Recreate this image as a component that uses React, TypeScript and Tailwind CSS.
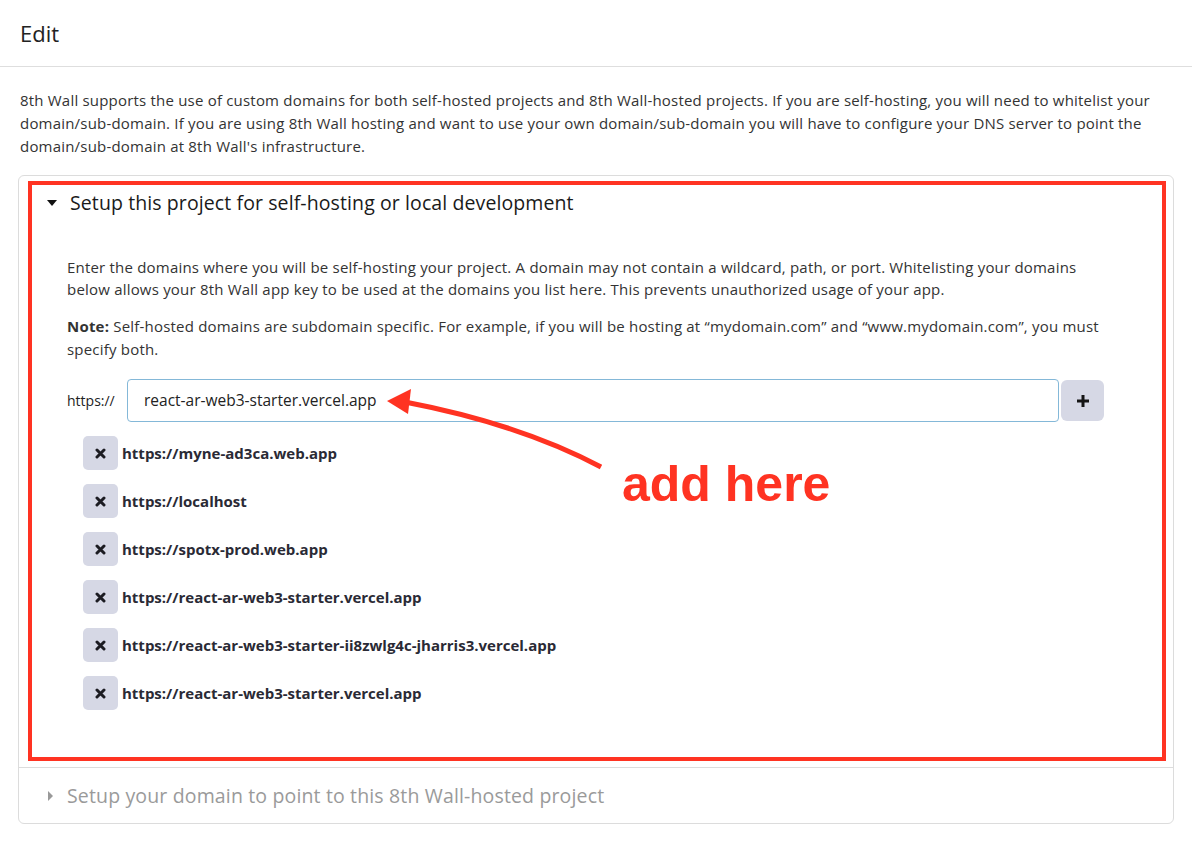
import React from 'react';

const domains = [
  'https://myne-ad3ca.web.app',
  'https://localhost',
  'https://spotx-prod.web.app',
  'https://react-ar-web3-starter.vercel.app',
  'https://react-ar-web3-starter-ii8zwlg4c-jharris3.vercel.app',
  'https://react-ar-web3-starter.vercel.app',
];

const XIcon = () => (
  <svg width="11" height="11" viewBox="0 0 11 11">
    <path d="M2 2 L9 9 M9 2 L2 9" stroke="#1c1c22" strokeWidth="3" strokeLinecap="round" />
  </svg>
);

const App: React.FC = () => {
  return (
    <div
      className="relative w-[1192px] h-[844px] bg-white text-[#2b2b33] overflow-hidden"
      style={{ fontFamily: '"Open Sans", Lato, sans-serif' }}
    >
      <div className="h-[67px] flex items-center px-5 border-b border-[#dedede]">
        <h1 className="text-[22px] text-[#222]">Edit</h1>
      </div>

      <div className="px-5 pt-[22px]">
        <p className="text-[15px] tracking-[0.2px] leading-[23px] text-[#333]">
          8th Wall supports the use of custom domains for both self-hosted projects and 8th Wall-hosted projects. If you are self-hosting, you will need to whitelist your domain/sub-domain. If you are using 8th Wall hosting and want to use your own domain/sub-domain you will have to configure your DNS server to point the domain/sub-domain at 8th Wall's infrastructure.
        </p>
      </div>

      <div className="mx-[18px] mt-[17px] border border-[#dcdcdc] rounded-[6px]">
        <div className="flex items-center gap-[12px] pl-[27px] h-[54px]">
          <svg width="12" height="8" viewBox="0 0 12 8"><path d="M1 1 L11 1 L6 7 Z" fill="#111" /></svg>
          <span className="text-[19.5px] tracking-[0.1px] font-medium text-[#1a1a1a]">Setup this project for self-hosting or local development</span>
        </div>

        <div className="pl-[48px] pr-[60px] pt-[26px] pb-[57px] text-[15px] tracking-[0.2px] text-[#333]">
          <p className="leading-[22px] pr-[20px]">
            Enter the domains where you will be self-hosting your project. A domain may not contain a wildcard, path, or port. Whitelisting your domains below allows your 8th Wall app key to be used at the domains you list here. This prevents unauthorized usage of your app.
          </p>
          <p className="leading-[23px] mt-[15px]">
            <strong className="font-bold">Note:</strong> Self-hosted domains are subdomain specific. For example, if you will be hosting at “mydomain.com” and “www.mydomain.com”, you must specify both.
          </p>

          <div className="flex items-center mt-[18px] tracking-normal">
            <span className="w-[60px] text-[14px] text-[#222]">https://</span>
            <div className="w-[932px] h-[43px] border border-[#84b8d8] rounded-[4px] flex items-center pl-[16px] text-[15.5px] text-[#222]">
              react-ar-web3-starter.vercel.app
            </div>
            <button className="ml-[2px] w-[43px] h-[41px] rounded-[6px] bg-[#d6d8e5] flex items-center justify-center">
              <svg width="14" height="14" viewBox="0 0 14 14"><path d="M7 1 V13 M1 7 H13" stroke="#151515" strokeWidth="3" /></svg>
            </button>
          </div>

          <div className="mt-[14px] pl-[16px] flex flex-col gap-[14px] tracking-normal">
            {domains.map((d, i) => (
              <div key={i} className="flex items-center gap-[4px]">
                <button className="w-[35px] h-[34px] rounded-[5px] bg-[#d6d8e5] flex items-center justify-center">
                  <XIcon />
                </button>
                <span className="text-[15px] font-bold text-[#2a2a35]">{d}</span>
              </div>
            ))}
          </div>
        </div>

        <div className="border-t border-[#dcdcdc] h-[56px] flex items-center gap-[14px] pl-[28px]">
          <svg width="6" height="10" viewBox="0 0 6 10"><path d="M1 0 L6 5 L1 10 Z" fill="#999" /></svg>
          <span className="text-[19.5px] tracking-[0.15px] text-[#9a9a9a]">Setup your domain to point to this 8th Wall-hosted project</span>
        </div>
      </div>

      {/* annotation overlay */}
      <div className="absolute left-[28px] top-[181px] w-[1138px] h-[580px] border-[4px] border-[#ff3322]" />
      <svg className="absolute left-0 top-0 pointer-events-none" width="1192" height="844">
        <path d="M601 467 Q520 424 405 402" stroke="#ff3322" strokeWidth="5" fill="none" />
        <path d="M387 401 L411 389 L408 414 Z" fill="#ff3322" />
      </svg>
      <div
        className="absolute left-[622px] top-[459px] text-[50px] font-bold text-[#ff3322] leading-none"
        style={{ fontFamily: '"Liberation Sans", Arial, sans-serif' }}
      >
        add here
      </div>
    </div>
  );
};

export default App;
